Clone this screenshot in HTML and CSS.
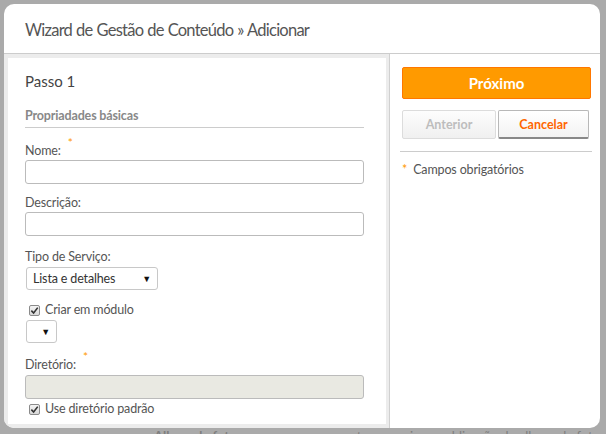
FILE: index.html
```html
<!DOCTYPE html>
<html lang="pt">
<head>
<meta charset="utf-8">
<link rel="stylesheet" href="styles.css">
</head>
<body>
<div class="backdrop">
  <div class="bg-row">
    <span class="bg-title">Album de fotos</span>
    <span class="bg-desc"><span class="bg-desc-text">Permite gerenciar a publicação de albuns de fotos</span></span>
  </div>
</div>
<div class="dialog">
  <div class="dialog-header">Wizard de Gestão de Conteúdo » Adicionar</div>
  <div class="dialog-body">
    <div class="main">
      <div class="card">
        <div class="step">Passo 1</div>
        <div class="section">Propriadades básicas</div>
        <div class="field">
          <label class="lbl">Nome:<span class="req">*</span></label>
          <input class="txt" type="text">
        </div>
        <div class="field">
          <label class="lbl">Descrição:</label>
          <input class="txt" type="text">
        </div>
        <div class="field tipo">
          <label class="lbl">Tipo de Serviço:</label>
          <div class="select wide"><span>Lista e detalhes</span><span class="arrow">▼</span></div>
        </div>
        <label class="check"><span class="box"><svg viewBox="0 0 10 10" width="9" height="9"><path d="M1.5 5.2 L4 7.8 L8.6 1.8" fill="none" stroke="#333" stroke-width="1.8"/></svg></span>Criar em módulo</label>
        <div class="select small"><span></span><span class="arrow">▼</span></div>
        <div class="field dir">
          <label class="lbl">Diretório:<span class="req">*</span></label>
          <input class="txt disabled" type="text" disabled>
        </div>
        <label class="check last"><span class="box"><svg viewBox="0 0 10 10" width="9" height="9"><path d="M1.5 5.2 L4 7.8 L8.6 1.8" fill="none" stroke="#333" stroke-width="1.8"/></svg></span>Use diretório padrão</label>
      </div>
    </div>
    <div class="side">
      <button class="btn-primary">Próximo</button>
      <div class="btn-row">
        <button class="btn btn-disabled">Anterior</button>
        <button class="btn btn-cancel">Cancelar</button>
      </div>
      <div class="legend"><span class="req-l">*</span>Campos obrigatórios</div>
    </div>
  </div>
</div>
</body>
</html>
```
FILE: styles.css
```css
html, body {
  margin: 0;
  padding: 0;
}
body {
  width: 606px;
  height: 434px;
  overflow: hidden;
  background: #aaaaaa;
  font-family: "Lato", "Open Sans", sans-serif;
  position: relative;
}
.backdrop {
  height: 434px;
  display: flex;
  flex-direction: column;
  justify-content: flex-end;
}
.bg-row {
  display: flex;
  height: 6px;
  overflow: visible;
  font-size: 13px;
  color: #7e7e7e;
  line-height: 16px;
}
.bg-title {
  margin-left: 154px;
  font-weight: bold;
  width: 203px;
}
.bg-desc {
  width: 249px;
  overflow: hidden;
  white-space: nowrap;
}
.bg-desc-text {
  margin-left: -33px;
}
.dialog {
  position: absolute;
  left: 4px;
  top: 4px;
  width: 596px;
  height: 424px;
  background: #fff;
  border-radius: 10px;
  overflow: hidden;
  display: flex;
  flex-direction: column;
}
.dialog-header {
  height: 50px;
  box-sizing: border-box;
  border-bottom: 1px solid #cccccc;
  padding-left: 21px;
  font-size: 16.5px;
  letter-spacing: -0.75px;
  word-spacing: 0.5px;
  line-height: 52px;
  color: #555;
}
.dialog-body {
  flex: 1;
  display: flex;
}
.main {
  width: 386px;
  box-sizing: border-box;
  background: #ececec;
  padding: 4px 3px 4px 4px;
  border-right: 1px solid #d0d0d0;
}
.card {
  background: #fff;
  height: 100%;
  box-sizing: border-box;
  padding: 10px 22px 0 17px;
  font-size: 12.5px;
  letter-spacing: -0.15px;
  color: #555;
}
.step {
  font-size: 15px;
  color: #444;
  line-height: 26px;
  letter-spacing: 0;
}
.section {
  margin-top: 13px;
  font-weight: bold;
  color: #888;
  font-size: 12.5px;
  line-height: 18px;
  padding-bottom: 2px;
  border-bottom: 1px solid #cccccc;
}
.field {
  display: flex;
  flex-direction: column;
}
.lbl {
  line-height: 16px;
  margin-top: 15px;
  margin-bottom: 1px;
  position: relative;
}
.req {
  color: #f90;
  font-size: 12px;
  position: relative;
  top: -8px;
  left: 7px;
}
.txt {
  margin: 0;
  width: 100%;
  height: 24px;
  box-sizing: border-box;
  border: 1px solid #bbbbbb;
  border-radius: 3px;
  background: #fff;
}
.txt.disabled {
  background: #e9e9e2;
}
.field + .field .lbl {
  margin-top: 11px;
}
.field.tipo .lbl {
  margin-top: 13px;
  margin-bottom: 2px;
}
.select {
  box-sizing: border-box;
  height: 23px;
  border: 1px solid #c8c8c8;
  border-radius: 3px;
  display: flex;
  align-items: center;
  justify-content: space-between;
  padding: 0 6px 0 6px;
  font-size: 12.5px;
  color: #333;
  margin-left: 1px;
}
.select.wide {
  width: 132px;
}
.select.small {
  width: 31px;
}
.arrow {
  font-size: 9px;
  color: #111;
}
.check {
  display: flex;
  align-items: center;
  margin-top: 12px;
  margin-left: 4px;
  line-height: 16px;
  height: 16px;
}
.check.last {
  margin-top: 2px;
}
.box {
  width: 11px;
  height: 11px;
  box-sizing: border-box;
  border: 1px solid #8a8a8a;
  border-radius: 2px;
  background: linear-gradient(#f4f4f4, #d8d8d8);
  margin-right: 5px;
  display: flex;
  align-items: center;
  justify-content: center;
}
.check + .select {
  margin-top: 2px;
}
.field.dir .lbl {
  margin-top: 14px;
  margin-bottom: 2px;
}
.side {
  flex: 1;
  padding: 13px 9px 0 12px;
  display: flex;
  flex-direction: column;
}
.btn-primary {
  height: 32px;
  border: 1px solid #f70;
  border-radius: 2px;
  background: #ff9a00;
  color: #fff;
  font-family: inherit;
  font-weight: bold;
  font-size: 15px;
  padding: 0;
}
.btn-row {
  display: flex;
  margin-top: 11px;
  gap: 2px;
}
.btn {
  height: 29px;
  width: 94px;
  border-radius: 2px;
  font-family: inherit;
  font-weight: bold;
  font-size: 12.5px;
  padding: 0;
}
.btn-disabled {
  border: 1px solid #dcdcdc;
  background: linear-gradient(#fdfdfd, #f0f0f0);
  color: #bdbdbd;
}
.btn-cancel {
  width: 91px;
  border: 1px solid #b8b8b8;
  border-bottom: 2px solid #888;
  background: linear-gradient(#fff, #f2f2f2);
  color: #f60;
}
.legend {
  margin-top: 12px;
  border-top: 1px solid #cccccc;
  padding-top: 10px;
  font-size: 12.5px;
  letter-spacing: -0.15px;
  color: #555;
  margin-right: -1px;
  margin-left: -2px;
}
.req-l {
  color: #f90;
  margin: 0 6px 0 2px;
}
```
